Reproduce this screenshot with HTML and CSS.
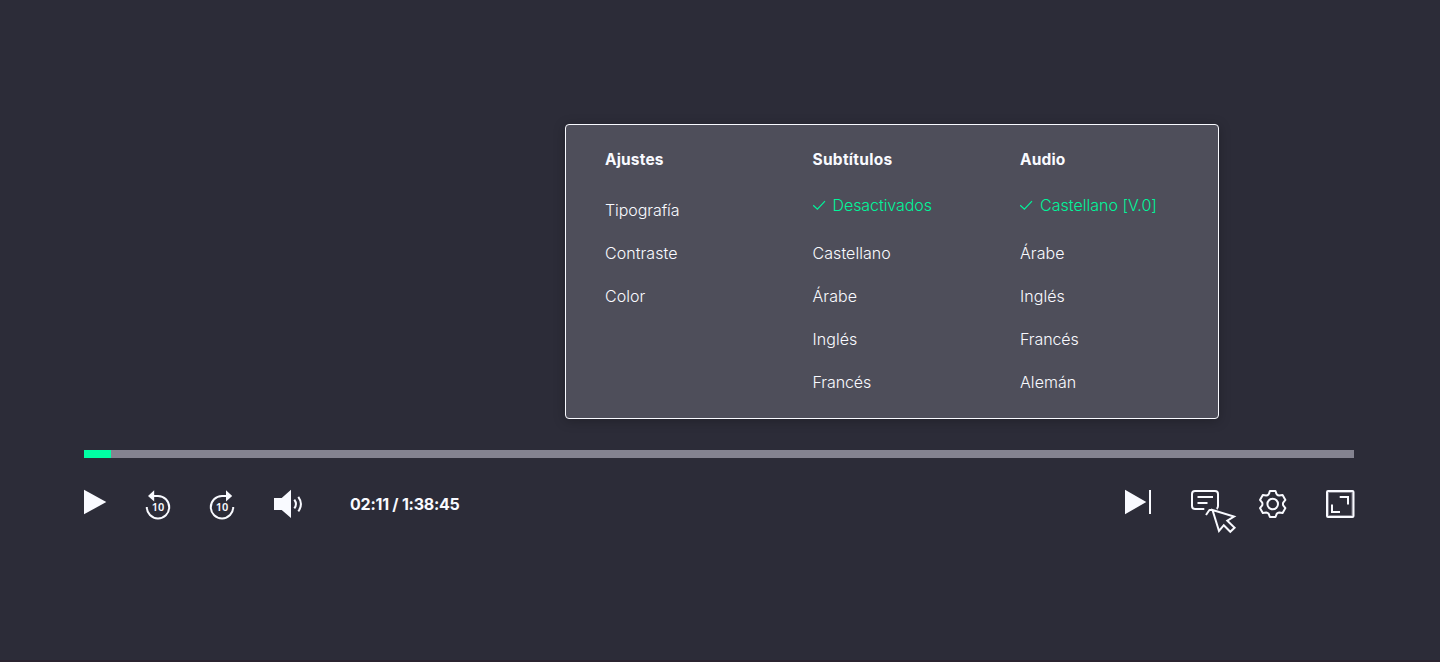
FILE: index.html
```html
<!DOCTYPE html>
<html lang="es">
<head>
<meta charset="utf-8">
<title>Reproductor</title>
<link rel="stylesheet" href="styles.css">
</head>
<body>
<main class="player">
  <section class="menu">
    <div class="column">
      <h2>Ajustes</h2>
      <ul class="plain">
        <li class="tight">Tipografía</li><li>Contraste</li><li>Color</li>
      </ul>
    </div>
    <div class="column">
      <h2 class="wide">Subtítulos</h2>
      <p class="selected"><svg class="check" viewBox="0 0 14 12"><path d="M.2 6.3 4.4 10.2 12 2.2"/></svg><span>Desactivados</span></p>
      <ul>
        <li>Castellano</li><li>Árabe</li><li>Inglés</li><li class="tight">Francés</li>
      </ul>
    </div>
    <div class="column">
      <h2>Audio</h2>
      <p class="selected"><svg class="check" viewBox="0 0 14 12"><path d="M.2 6.3 4.4 10.2 12 2.2"/></svg><span class="loose">Castellano [V.0]</span></p>
      <ul>
        <li>Árabe</li><li>Inglés</li><li class="tight">Francés</li><li>Alemán</li>
      </ul>
    </div>
  </section>
  <div class="progress"><div class="elapsed"></div></div>
  <div class="controls">
    <div class="group left">
      <svg class="icon" width="24" height="48" viewBox="0 0 24 48"><path class="solid" d="M0 3.7 22.3 16 0 28.3Z"/></svg>
      <svg class="icon" width="28" height="48" viewBox="0 0 28 48"><path d="M2.8 21A11.2 11.2 0 1 0 14 10H9"/><path class="solid" d="M4 10 10.2 4.2V15.6Z"/><text x="14" y="25.2">10</text></svg>
      <svg class="icon" width="28" height="48" viewBox="0 0 28 48"><path d="M25.2 21A11.2 11.2 0 1 1 14 10H19"/><path class="solid" d="M24.2 10 18 4.2V15.6Z"/><text x="14" y="25.2">10</text></svg>
      <svg class="icon" width="32" height="48" viewBox="0 0 32 48"><path class="solid" d="M2 12H9.7L19 3.7V32L9.7 24H2Z"/><path d="M22.3 13.6Q25.6 18 22.3 22.4M26.3 10.8Q31.6 18 26.3 25.4"/></svg>
      <span class="time">02:11 / 1:38:45</span>
    </div>
    <div class="group right">
      <svg class="icon" width="27" height="48" viewBox="0 0 27 48"><path class="solid" d="M0 3.7 21.3 16 0 28.3ZM24 4H26V28H24Z"/></svg>
      <svg class="icon subs" width="46" height="48" viewBox="0 0 46 48"><path d="M13.3 23H4a3 3 0 0 1-3-3V8a3 3 0 0 1 3-3H24a3 3 0 0 1 3 3V20Q27 22 25.6 22.8M6.5 11H22M6.5 17H16.5M15 29 18.4 24H21"/><path class="cursor" d="M21.5 24 43 30.6 36.3 34.7 43.6 41.7 39.3 45.8 32.8 39.2 28 45Z"/></svg>
      <svg class="icon" width="28" height="48" viewBox="-13.7 -18 28 48"><path d="M-4-9.8Q-3.4-10.5-3.2-12L-2.8-13H2.8L3.2-12Q3.4-10.5 4-9.8Q5.2-8.6 6.5-8.4L9.9-8.9 12.7-4.1 10.5-1.4Q10 0 10.5 1.4L12.7 4.1 9.9 8.9 6.5 8.4Q5.2 8.6 4 9.8L2.8 13H-2.8L-4 9.8Q-5.2 8.6-6.5 8.4L-9.9 8.9-12.7 4.1-10.5 1.4Q-10 0-10.5-1.4L-12.7-4.1-9.9-8.9-6.5-8.4Q-5.2-8.6-4-9.8Z"/><circle r="5.3"/></svg>
      <svg class="icon" width="29" height="48" viewBox="0 0 29 48"><rect class="halo" x="2.3" y="6.3" width="23.9" height="23.4"/><rect x="1" y="5" width="26.5" height="26" rx="1"/><path class="square" d="M13.7 11H22V18.5M6 18.5V26H14"/></svg>
    </div>
  </div>
</main>
</body>
</html>
```
FILE: styles.css
```css
* { box-sizing: border-box; }
body {
  margin: 0;
  background: #2c2c38;
  color: #f9faff;
  font-family: Inter, "Liberation Sans", sans-serif;
  font-size: 16px;
}
.player {
  height: 662px;
  padding: 124px 86px 0 84px;
  border-bottom: 2px solid #2b2430;
}
.menu {
  width: 654px;
  height: 295px;
  margin-left: 481px;
  padding: 24px 0 0 39px;
  display: flex;
  background: #4e4e5a;
  border: 1px solid #f9faff;
  border-radius: 4px;
  box-shadow: 0 2px 12px rgba(0, 0, 0, 0.25);
}
.column { flex: none; width: 207.5px; }
.column:last-child { width: 190px; }
h2 {
  margin: 0;
  font-size: 15.5px;
  font-weight: 650;
  line-height: 22px;
  letter-spacing: 0.15px;
}
.wide { letter-spacing: 0.27px; }
ul {
  margin: 0;
  padding: 0;
  list-style: none;
  font-weight: 340;
  letter-spacing: 0.06px;
}
li { height: 43px; line-height: 22px; }
.tight { letter-spacing: -0.08px; }
.plain { margin-top: 28px; }
.selected {
  display: flex;
  align-items: center;
  height: 22px;
  margin: 23px 0 26px;
  color: #00f59b;
  font-weight: 340;
  letter-spacing: -0.07px;
}
.loose { letter-spacing: 0.02px; }
.check {
  width: 14px;
  height: 12px;
  margin-right: 6px;
  fill: none;
  stroke: #00f59b;
  stroke-width: 1.2;
}
.progress { height: 8px; margin-top: 31px; background: #848390; }
.elapsed { width: 27px; height: 100%; background: #00ffa3; }
.controls { display: flex; justify-content: space-between; margin-top: 28px; }
.group { display: flex; }
.left { gap: 36px; }
.right { gap: 39.4px; margin-right: -1px; }
.icon { display: block; flex: none; fill: none; stroke: #f9faff; stroke-width: 2; stroke-linejoin: round; }
.icon .solid { fill: #f9faff; stroke: none; }
.icon .halo { stroke: #777681; stroke-width: 1.5; }
.icon .square { stroke-linejoin: miter; }
.icon .cursor { fill: #2c2c38; stroke-linejoin: miter; }
.icon text { fill: #f9faff; stroke: none; font-family: "Noto Sans", sans-serif; font-size: 11px; font-weight: 600; text-anchor: middle; }
.subs { margin-right: -18px; }
.time { margin-left: 10px; line-height: 37px; font-weight: 700; letter-spacing: -0.24px; }
```
